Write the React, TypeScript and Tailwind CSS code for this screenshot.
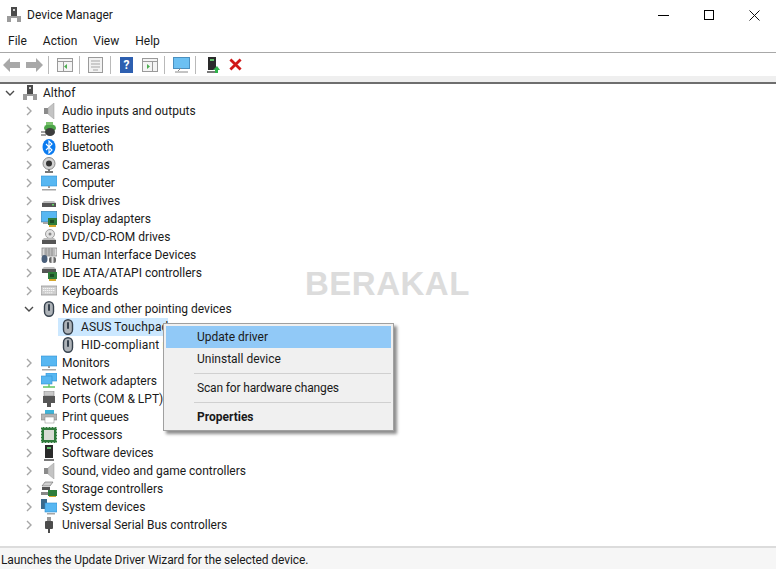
import type { ReactNode } from "react";

const Svg = ({ children, w = 16, h = 16 }: { children: ReactNode; w?: number; h?: number }) => (
  <svg width={w} height={h} viewBox={`0 0 ${w} ${h}`} className="block shrink-0">
    {children}
  </svg>
);

const Chevron = ({ open }: { open?: boolean }) => (
  <svg width="10" height="10" viewBox="0 0 10 10" className="block shrink-0">
    {open ? (
      <path d="M1 3l4 4 4-4" fill="none" stroke="#4a4a4a" strokeWidth="1.4" />
    ) : (
      <path d="M3 1l4 4-4 4" fill="none" stroke="#a6a6a6" strokeWidth="1.4" />
    )}
  </svg>
);

const HostIcon = () => (
  <Svg w={14} h={16}>
    <rect x="4" y="0" width="6" height="9" fill="#4a4a4a" />
    <rect x="6" y="2" width="2" height="2" fill="#cfcfcf" />
    <rect x="0" y="9" width="14" height="6" fill="#9b9b9b" />
    <rect x="4" y="11" width="6" height="4" fill="#fff" />
  </Svg>
);

const Speaker = () => (
  <Svg>
    <rect x="3" y="5" width="4" height="6" fill="#8a8a8a" />
    <path d="M7 5l6-5v16l-6-5z" fill="#c4c4c4" stroke="#9a9a9a" strokeWidth="0.5" />
  </Svg>
);

const Battery = () => (
  <Svg>
    <path d="M0 11h5M0 14h5" stroke="#444" strokeWidth="1.2" />
    <ellipse cx="9" cy="7" rx="6" ry="4" fill="#4ea64a" />
    <ellipse cx="9" cy="11" rx="5" ry="4" fill="#3d3d3d" />
    <rect x="5" y="1" width="7" height="3" fill="#7cc36f" />
  </Svg>
);

const BluetoothIcon = () => (
  <Svg>
    <ellipse cx="8" cy="8" rx="6.5" ry="8" fill="#0a7bf0" />
    <path d="M5 5l6 6-3 3V2l3 3-6 6" fill="none" stroke="#fff" strokeWidth="1.1" />
  </Svg>
);

const Camera = () => (
  <Svg>
    <circle cx="8" cy="6.5" r="6" fill="#d2d2d2" stroke="#8c8c8c" />
    <circle cx="8" cy="6.5" r="3" fill="#333" />
    <rect x="7" y="12" width="2" height="2" fill="#777" />
    <rect x="4" y="14" width="8" height="2" fill="#777" />
  </Svg>
);

const MonitorIcon = () => (
  <Svg>
    <rect x="0" y="1" width="16" height="10" fill="#57b7f2" stroke="#2f8fd0" strokeWidth="0.6" />
    <rect x="7" y="11" width="2" height="2" fill="#9a9a9a" />
    <rect x="1" y="14" width="14" height="1.5" fill="#a6a6a6" />
  </Svg>
);

const Disk = () => (
  <Svg>
    <path d="M1 10l2-2h10l2 2z" fill="#bdbdbd" />
    <rect x="1" y="10" width="14" height="4" fill="#555" />
    <rect x="11" y="11" width="2" height="1.5" fill="#63d463" />
  </Svg>
);

const Display = () => (
  <Svg>
    <rect x="0" y="0" width="16" height="11" fill="#57b7f2" stroke="#4a6d85" strokeWidth="0.6" />
    <rect x="2" y="11" width="7" height="2" fill="#a6a6a6" />
    <rect x="7" y="7" width="9" height="7" fill="#2f7d3b" />
    <rect x="9" y="9" width="4" height="3" fill="#1c4d25" />
    <rect x="8" y="14" width="7" height="2" fill="#d4a72c" />
  </Svg>
);

const Dvd = () => (
  <Svg>
    <circle cx="9" cy="5" r="4.5" fill="#e3e3e3" stroke="#9e9e9e" />
    <circle cx="9" cy="5" r="1.5" fill="#888" />
    <path d="M1 11l2-2h10l2 2z" fill="#bdbdbd" />
    <rect x="1" y="11" width="14" height="4" fill="#555" />
  </Svg>
);

const Hid = () => (
  <Svg>
    <rect x="1" y="1" width="15" height="8" fill="#d9d9d9" stroke="#777" strokeWidth="0.7" />
    <path d="M3 3h11M3 5h11M3 7h11M5 1v8M8 1v8M11 1v8" stroke="#777" strokeWidth="0.6" />
    <ellipse cx="3.5" cy="12" rx="3" ry="4" fill="#4a5f7a" />
    <rect x="8" y="10" width="7" height="6" rx="2" fill="#6a6a6a" />
    <rect x="10.5" y="10" width="2" height="6" fill="#e5e5e5" />
  </Svg>
);

const Ide = () => (
  <Svg>
    <path d="M1 4l2-2h10l2 2z" fill="#bdbdbd" />
    <rect x="1" y="4" width="14" height="4" fill="#555" />
    <rect x="7" y="7" width="9" height="7" fill="#2f7d3b" />
    <rect x="9" y="9" width="4" height="3" fill="#1c4d25" />
    <rect x="8" y="14" width="7" height="2" fill="#d4a72c" />
  </Svg>
);

const Keyboard = () => (
  <Svg>
    <rect x="0" y="3" width="16" height="9" fill="#cfcfcf" stroke="#8a8a8a" strokeWidth="0.7" />
    <path d="M2 5.5h12M2 7.5h12M4 9.8h8" stroke="#f5f5f5" strokeWidth="1" strokeDasharray="1.4 0.6" />
  </Svg>
);

const Mouse = () => (
  <Svg w={12} h={16}>
    <rect x="1.5" y="0.7" width="9" height="14.6" rx="4.5" fill="#aeb3b8" stroke="#36414d" strokeWidth="1.4" />
    <rect x="5" y="3" width="2" height="7" rx="1" fill="#36414d" />
  </Svg>
);

const Network = () => (
  <Svg>
    <rect x="5" y="0" width="11" height="8" fill="#57b7f2" stroke="#2f8fd0" strokeWidth="0.6" />
    <rect x="0" y="3" width="11" height="8" fill="#57b7f2" stroke="#2f8fd0" strokeWidth="0.6" />
    <path d="M2 14h12M8 11v3" stroke="#63c463" strokeWidth="1.4" />
  </Svg>
);

const Port = () => (
  <Svg>
    <rect x="3" y="0" width="10" height="5" fill="#c8c8c8" stroke="#777" strokeWidth="0.5" />
    <rect x="2" y="5" width="12" height="7" fill="#555" />
    <rect x="6" y="12" width="4" height="4" fill="#555" />
  </Svg>
);

const Printer = () => (
  <Svg>
    <rect x="4" y="1" width="9" height="4" fill="#3fb4d9" />
    <rect x="0" y="5" width="16" height="6" fill="#b5b5b5" stroke="#777" strokeWidth="0.5" />
    <rect x="4" y="8" width="9" height="6" fill="#fff" stroke="#888" strokeWidth="0.5" />
  </Svg>
);

const Chip = () => (
  <Svg>
    <rect x="0.5" y="0.5" width="15" height="15" fill="none" stroke="#2e7a3a" strokeDasharray="1 0.5" />
    <rect x="1" y="1" width="14" height="14" fill="#2e7a3a" />
    <rect x="3" y="3" width="10" height="10" fill="#d8dcd4" />
  </Svg>
);

const Tower = ({ green }: { green?: boolean }) => (
  <Svg>
    <rect x="4" y="0" width="8" height="13" fill="#2a2a2a" />
    <rect x="6" y="2" width="4" height="2" fill="#5fbf6a" />
    <rect x="3" y="14" width="10" height="2" fill="#7a7a7a" />
    {green && <path d="M11 16v-3H9l4-4 3 4h-2v3z" fill="#2fb34a" />}
  </Svg>
);

const Storage = () => (
  <Svg>
    <path d="M1 5l3-4h8l-3 4z" fill="#d0d0d0" stroke="#666" strokeWidth="0.6" />
    <rect x="1" y="6" width="8" height="3" fill="#555" />
    <rect x="7" y="9" width="9" height="6" fill="#2f7d3b" />
    <rect x="0" y="11" width="7" height="3" fill="#888" />
    <rect x="8" y="15" width="7" height="1" fill="#d4a72c" />
  </Svg>
);

const SystemIcon = () => (
  <Svg>
    <rect x="0" y="0" width="6" height="10" fill="#3a6a8c" />
    <rect x="4" y="4" width="12" height="9" fill="#57b7f2" stroke="#2f8fd0" strokeWidth="0.6" />
    <rect x="6" y="14" width="8" height="1.5" fill="#a6a6a6" />
  </Svg>
);

const Usb = () => (
  <Svg>
    <rect x="6" y="0" width="4" height="4" fill="#999" />
    <rect x="4" y="4" width="8" height="8" rx="1" fill="#4c4c4c" />
    <rect x="7" y="12" width="2" height="4" fill="#4c4c4c" />
  </Svg>
);

const devices: { label: string; icon: ReactNode }[] = [
  { label: "Audio inputs and outputs", icon: <Speaker /> },
  { label: "Batteries", icon: <Battery /> },
  { label: "Bluetooth", icon: <BluetoothIcon /> },
  { label: "Cameras", icon: <Camera /> },
  { label: "Computer", icon: <MonitorIcon /> },
  { label: "Disk drives", icon: <Disk /> },
  { label: "Display adapters", icon: <Display /> },
  { label: "DVD/CD-ROM drives", icon: <Dvd /> },
  { label: "Human Interface Devices", icon: <Hid /> },
  { label: "IDE ATA/ATAPI controllers", icon: <Ide /> },
  { label: "Keyboards", icon: <Keyboard /> },
];

const devicesAfter: { label: string; icon: ReactNode }[] = [
  { label: "Monitors", icon: <MonitorIcon /> },
  { label: "Network adapters", icon: <Network /> },
  { label: "Ports (COM & LPT)", icon: <Port /> },
  { label: "Print queues", icon: <Printer /> },
  { label: "Processors", icon: <Chip /> },
  { label: "Software devices", icon: <Tower /> },
  { label: "Sound, video and game controllers", icon: <Speaker /> },
  { label: "Storage controllers", icon: <Storage /> },
  { label: "System devices", icon: <SystemIcon /> },
  { label: "Universal Serial Bus controllers", icon: <Usb /> },
];

const Row = ({ label, icon, open }: { label: string; icon: ReactNode; open?: boolean }) => (
  <div className="flex h-[18px] items-center pl-[24px]">
    <div className="flex w-[17px] justify-start">
      <Chevron open={open} />
    </div>
    <div className="flex w-[16px] justify-center">{icon}</div>
    <span className="ml-[5px] whitespace-nowrap">{label}</span>
  </div>
);

const ToolSep = () => <div className="mx-[5px] h-[18px] w-px bg-[#b9b9b9]" />;

const App = () => {
  return (
    <div className="relative flex h-[569px] w-[776px] flex-col overflow-hidden bg-white font-['Roboto',sans-serif] text-[12px] text-[#1a1a1a]">
      {/* title bar */}
      <div className="flex h-[30px] items-center pl-[7px]">
        <HostIcon />
        <span className="ml-[6px]">Device Manager</span>
        <div className="ml-auto flex items-center gap-[35px] pr-[16px]">
          <div className="h-px w-[11px] bg-black" />
          <div className="h-[10px] w-[10px] border border-black" />
          <svg width="11" height="11" viewBox="0 0 11 11" className="block">
            <path d="M0.5 0.5l10 10M10.5 0.5l-10 10" stroke="#111" strokeWidth="1" />
          </svg>
        </div>
      </div>

      {/* menu */}
      <div className="flex h-[23px] items-center gap-[16px] border-b border-[#a8a8a8] pl-[8px]">
        <span>File</span>
        <span>Action</span>
        <span>View</span>
        <span>Help</span>
      </div>

      {/* toolbar */}
      <div className="flex h-[23px] items-center pl-[3px]">
        <svg width="17" height="14" viewBox="0 0 17 14" className="block">
          <path d="M0 7l7-7v4h10v6H7v4z" fill="#a8a8a8" />
        </svg>
        <svg width="17" height="14" viewBox="0 0 17 14" className="ml-[6px] block">
          <path d="M17 7l-7-7v4H0v6h10v4z" fill="#a8a8a8" />
        </svg>
        <ToolSep />
        <svg width="16" height="14" viewBox="0 0 16 14" className="ml-[3px] block">
          <rect x="0.5" y="0.5" width="15" height="13" fill="#f4f4f4" stroke="#9a9a9a" />
          <path d="M0 3.5h16M6.5 4v9" stroke="#9a9a9a" />
          <path d="M10 6v5l-3-2.5z" fill="#4caf50" />
        </svg>
        <div className="ml-[1px]">
          <ToolSep />
        </div>
        <svg width="15" height="16" viewBox="0 0 15 16" className="ml-[3px] block">
          <rect x="0.5" y="0.5" width="14" height="15" fill="#f2f2f2" stroke="#9a9a9a" />
          <path d="M3 4h9M3 7h9M3 10h9M5 13h5" stroke="#a5a5a5" />
        </svg>
        <div className="ml-[2px]">
          <ToolSep />
        </div>
        <div className="ml-[4px] flex h-[16px] w-[13px] items-center justify-center bg-[#2d5fb0] text-[12px] font-bold leading-none text-white">
          ?
        </div>
        <svg width="16" height="14" viewBox="0 0 16 14" className="ml-[9px] block">
          <rect x="0.5" y="0.5" width="15" height="13" fill="#f4f4f4" stroke="#9a9a9a" />
          <path d="M0 3.5h16M10.5 4v9" stroke="#9a9a9a" />
          <path d="M5 6v5l3-2.5z" fill="#4caf50" />
        </svg>
        <div className="ml-[1px]">
          <ToolSep />
        </div>
        <svg width="17" height="16" viewBox="0 0 17 16" className="ml-[3px] block">
          <rect x="0.5" y="0.5" width="16" height="11" fill="#6cc0f2" stroke="#4a90c0" />
          <path d="M8 11l-3 3M2 15h13" stroke="#888" />
        </svg>
        <ToolSep />
        <div className="ml-[3px]">
          <Tower green />
        </div>
        <svg width="13" height="13" viewBox="0 0 14 14" className="ml-[9px] block">
          <path d="M1.5 1.5l11 11M12.5 1.5l-11 11" stroke="#d01818" strokeWidth="3" />
        </svg>
      </div>

      <div className="h-[8px] border-b-2 border-[#6e6e6e] bg-[#efefef]" />

      {/* tree */}
      <div className="flex-1">
        <div className="flex h-[18px] items-center pl-[5px]">
          <div className="flex w-[18px]">
            <Chevron open />
          </div>
          <HostIcon />
          <span className="ml-[6px]">Althof</span>
        </div>
        {devices.map((d) => (
          <Row key={d.label} label={d.label} icon={d.icon} />
        ))}
        <Row label="Mice and other pointing devices" icon={<Mouse />} open />
        <div className="flex h-[18px] items-center pl-[58px]">
          <div className="flex h-full w-[110px] items-center bg-[#cce8ff] pl-[4px]">
            <Mouse />
            <span className="ml-[7px] whitespace-nowrap tracking-[0.15px]">ASUS Touchpad</span>
          </div>
        </div>
        <div className="flex h-[18px] items-center pl-[62px]">
          <Mouse />
          <span className="ml-[7px] whitespace-nowrap tracking-[0.15px]">HID-compliant mouse</span>
        </div>
        {devicesAfter.map((d) => (
          <Row key={d.label} label={d.label} icon={d.icon} />
        ))}
      </div>

      {/* status bar */}
      <div className="flex h-[23px] items-center border-t-2 border-[#dcdcdc] bg-[#f6f6f6] pl-px pt-[2px] tracking-[-0.1px]">
        Launches the Update Driver Wizard for the selected device.
      </div>

      {/* watermark */}
      <div className="absolute left-[305px] top-[263px] font-['Liberation_Sans',sans-serif] text-[33px] font-bold leading-[42px] tracking-[0.5px] text-[#dcdcdc]">
        BERAKAL
      </div>

      {/* context menu */}
      <div className="absolute left-[163px] top-[323px] h-[108px] w-[231px] border border-[#a0a0a0] bg-[#f0f0f0] p-[2px] shadow-[3px_3px_3px_rgba(0,0,0,0.45)]">
        <div className="flex h-[22px] items-center bg-[#91c9f7] pl-[31px]">Update driver</div>
        <div className="flex h-[22px] items-center pl-[31px]">Uninstall device</div>
        <div className="my-[3px] ml-[28px] h-px bg-[#d0d0d0]" />
        <div className="flex h-[22px] items-center pl-[31px] tracking-[-0.15px]">Scan for hardware changes</div>
        <div className="my-[3px] ml-[28px] h-px bg-[#d0d0d0]" />
        <div className="flex h-[22px] items-center pl-[31px] font-bold">Properties</div>
      </div>
    </div>
  );
};

export default App;
